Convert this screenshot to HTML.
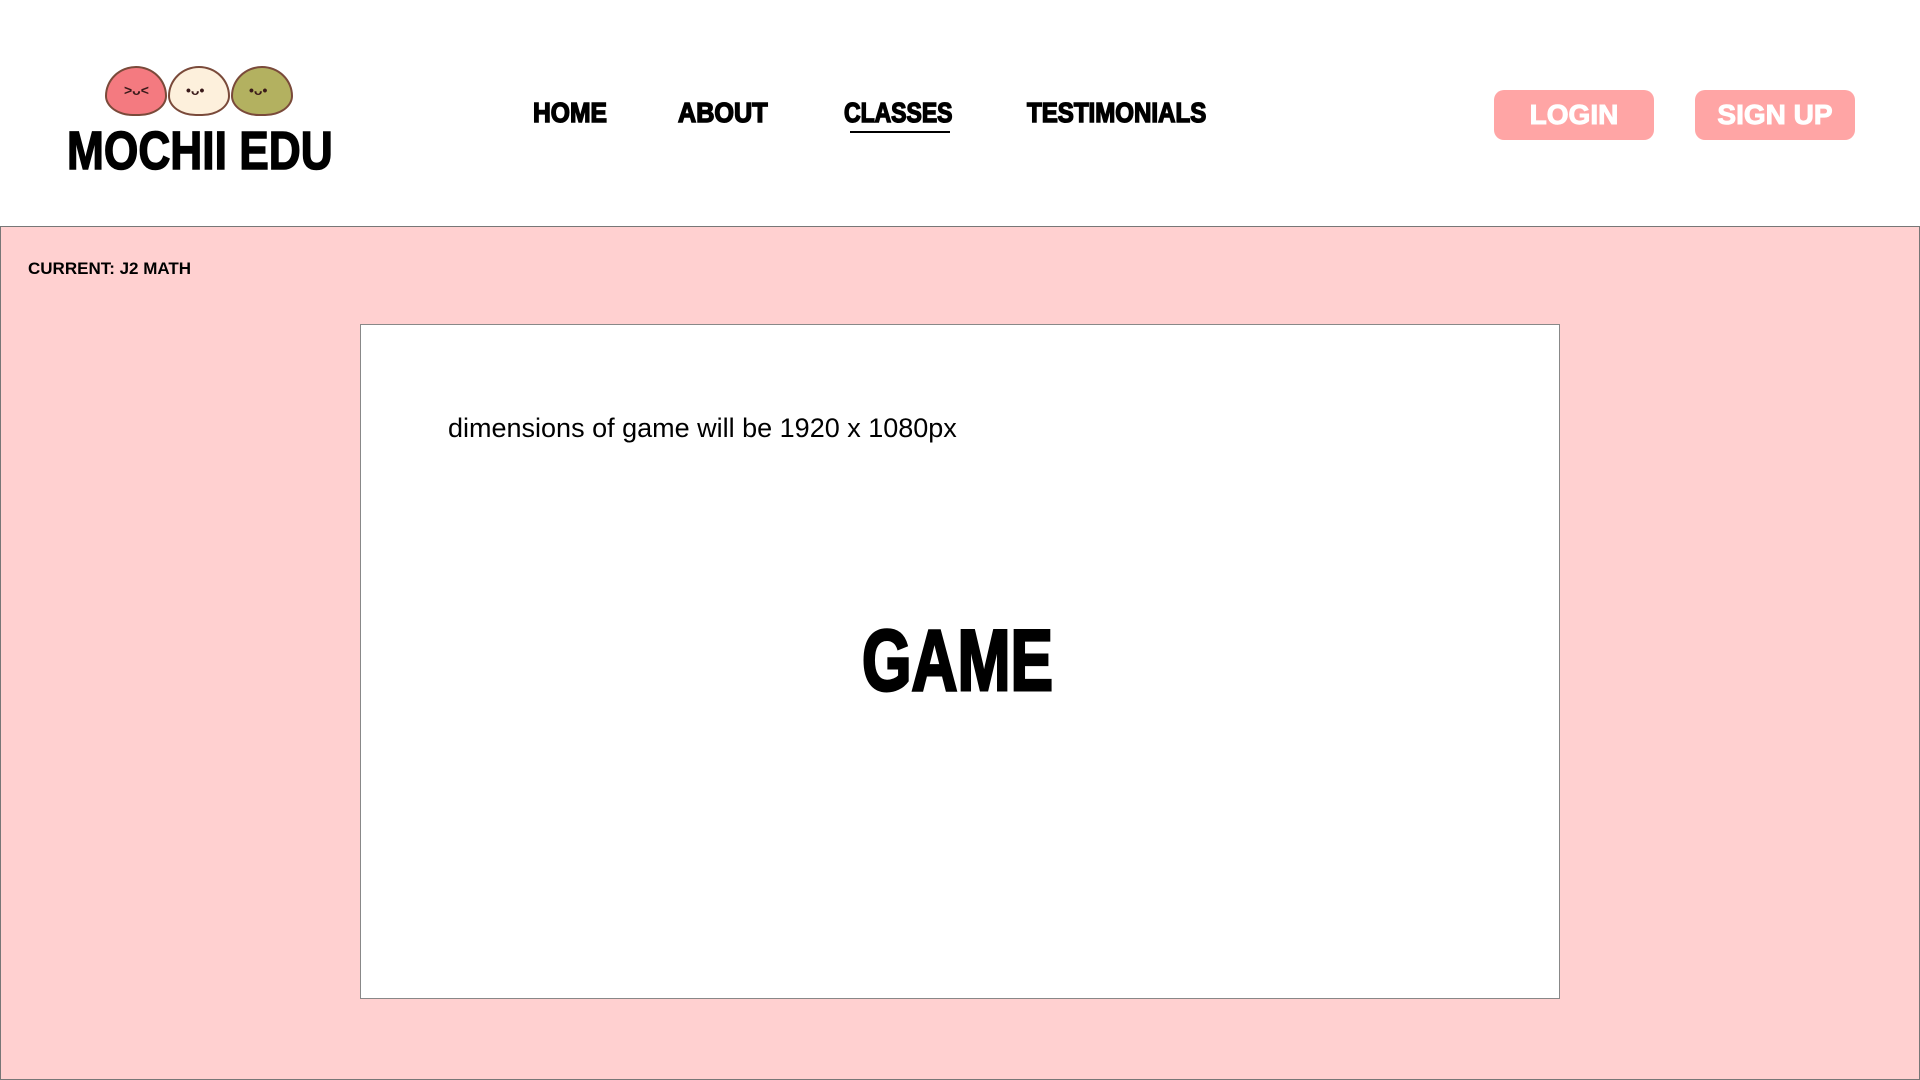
<!DOCTYPE html>
<html><head><meta charset="utf-8"><style>
body{margin:0;width:1920px;height:1080px;background:#fff;position:relative;overflow:hidden;font-family:"Liberation Sans",sans-serif}
.a{position:absolute;white-space:nowrap}
.bub{font-weight:900;-webkit-text-stroke:1.5px currentColor;transform-origin:left top}
.nav{font-size:28px;top:97px;color:#000}
.btn{position:absolute;top:90px;height:50px;width:160px;background:#ffa5a5;border-radius:10px;color:#fff;font-weight:bold;font-size:28px;text-align:center;line-height:50px;-webkit-text-stroke:1px #fff}
.m{position:absolute;border-radius:50% 50% 45% 45%/60% 60% 40% 40%;border:2px solid #7a4a3a;box-sizing:border-box}
</style></head><body>
<div class="m" style="left:105px;top:66px;width:62px;height:50px;background:#f47a80"></div>
<div class="m" style="left:168px;top:66px;width:62px;height:50px;background:#fdf0dc"></div>
<div class="m" style="left:231px;top:66px;width:62px;height:50px;background:#b3b160"></div>
<div class="a" style="left:124px;top:82px;font-size:14px;color:#3a1a1a;font-weight:bold">&gt;ᴗ&lt;</div>
<div class="a" style="left:186px;top:82px;font-size:14px;color:#3a1a1a;font-weight:bold">•ᴗ•</div>
<div class="a" style="left:249px;top:82px;font-size:14px;color:#3a1a1a;font-weight:bold">•ᴗ•</div>
<div class="a bub" style="left:67px;top:120px;font-size:54px;transform:scaleX(0.82)">MOCHII EDU</div>
<div class="a bub nav" style="left:533px;transform:scaleX(0.88)">HOME</div>
<div class="a bub nav" style="left:678px;transform:scaleX(0.9)">ABOUT</div>
<div class="a bub nav" style="left:844px;transform:scaleX(0.82)">CLASSES</div>
<div class="a" style="left:850px;top:131px;width:100px;height:2px;background:#000"></div>
<div class="a bub nav" style="left:1027px;transform:scaleX(0.86)">TESTIMONIALS</div>
<div class="btn" style="left:1494px">LOGIN</div>
<div class="btn" style="left:1695px">SIGN UP</div>
<div class="a" style="left:0;top:226px;width:1920px;height:854px;background:#ffd0d0;border:1px solid #777;box-sizing:border-box"></div>
<div class="a" style="left:28px;top:259px;font-size:17px;font-weight:bold">CURRENT: J2 MATH</div>
<div class="a" style="left:360px;top:324px;width:1200px;height:675px;background:#fff;border:1px solid #888;box-sizing:border-box"></div>
<div class="a" style="left:448px;top:413px;font-size:27px">dimensions of game will be 1920 x 1080px</div>
<div class="a bub" style="left:862px;top:612px;font-size:86px;transform:scaleX(0.74);-webkit-text-stroke:3px #000">GAME</div>
</body></html>
